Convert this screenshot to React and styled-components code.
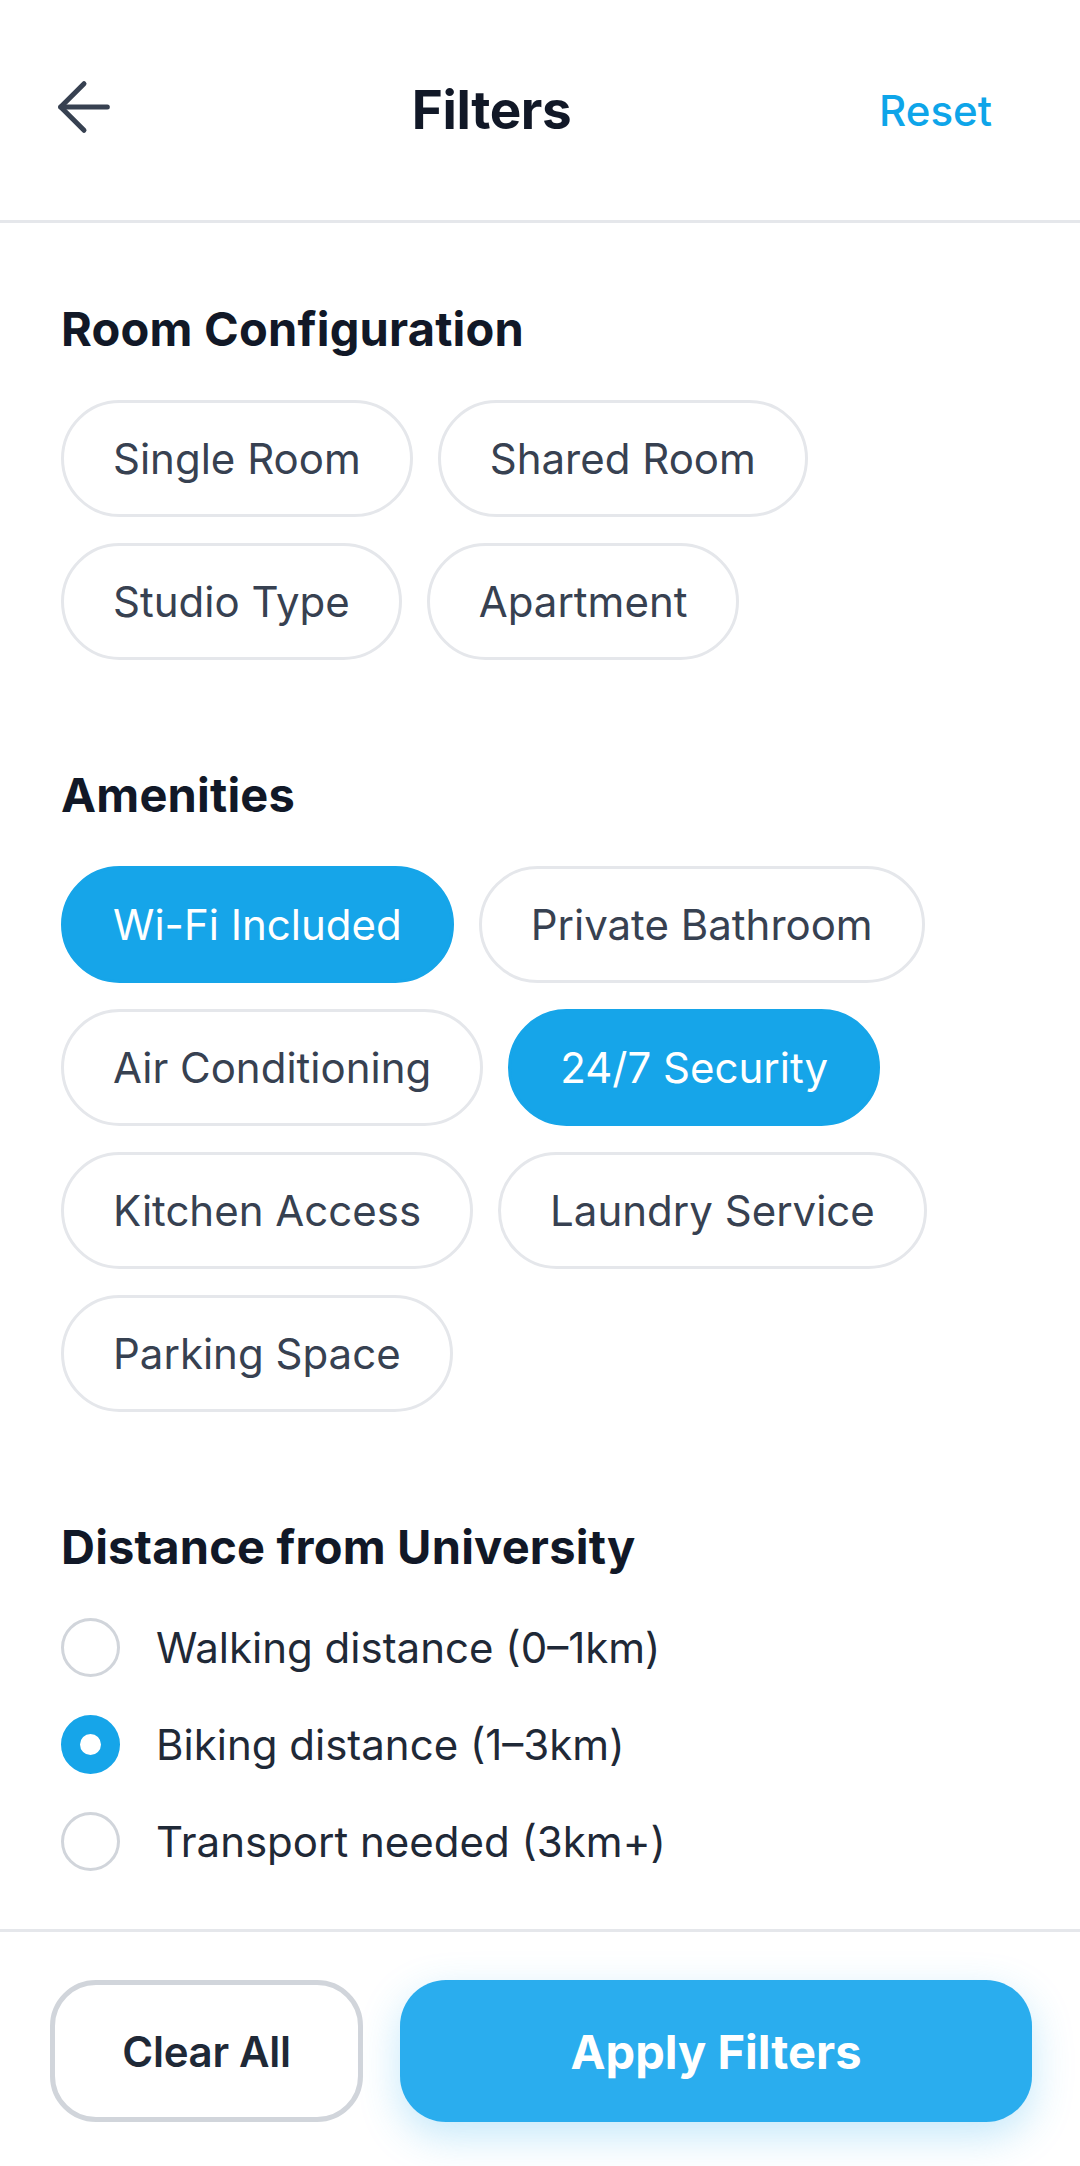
import React, { useState } from 'react';
import styled, { createGlobalStyle } from 'styled-components';
import { ArrowLeft } from 'lucide-react';

const GlobalStyle = createGlobalStyle`
  html, body {
    margin: 0;
    padding: 0;
    background: #ffffff;
  }
  body {
    font-family: "Inter", "Noto Sans", sans-serif;
    -webkit-font-smoothing: antialiased;
  }
  * {
    box-sizing: border-box;
  }
`;

const Page = styled.div`
  min-height: 100vh;
  display: flex;
  flex-direction: column;
  background: #ffffff;
`;

const Header = styled.header`
  height: 223px;
  display: flex;
  align-items: center;
  justify-content: space-between;
  padding: 0 68px 0 44px;
  border-bottom: 3px solid #e5e7eb;
`;

const IconButton = styled.button`
  width: 80px;
  height: 80px;
  padding: 0;
  border: none;
  background: none;
  color: #374151;
  display: flex;
  align-items: center;
  justify-content: center;
  margin-top: -6px;
`;

const Title = styled.h1`
  margin: 0;
  font-size: 53px;
  font-weight: 700;
  color: #111827;
  letter-spacing: -0.4px;
`;

const TextButton = styled.button`
  border: none;
  background: none;
  padding: 0 20px;
  font-family: inherit;
  font-size: 42px;
  font-weight: 500;
  color: #0ea5e9;
`;

const Main = styled.main`
  flex: 1;
  padding: 77px 61px 0;
`;

const Section = styled.section`
  margin-bottom: 106px;

  &:last-child {
    margin-bottom: 0;
  }
`;

const SectionTitle = styled.h2`
  margin: 0 0 42px;
  font-size: 47px;
  line-height: 58px;
  font-weight: 700;
  color: #111827;
  letter-spacing: 0.2px;
`;

const ChipGrid = styled.div`
  display: flex;
  flex-wrap: wrap;
  gap: 26px 25px;
`;

const Chip = styled.button`
  height: 117px;
  padding: 0 49px;
  border-radius: 999px;
  border: 3px solid ${p => (p.$active ? '#16a5e9' : '#e5e7eb')};
  background: ${p => (p.$active ? '#16a5e9' : '#ffffff')};
  color: ${p => (p.$active ? '#ffffff' : '#374151')};
  font-family: inherit;
  font-size: 42px;
  font-weight: 400;
  letter-spacing: 0;
  cursor: pointer;
`;

const RadioList = styled.div`
  display: flex;
  flex-direction: column;
  gap: 38px;
`;

const RadioRow = styled.label`
  display: flex;
  align-items: center;
  gap: 36px;
  cursor: pointer;
`;

const RadioDot = styled.span`
  width: 59px;
  height: 59px;
  flex-shrink: 0;
  border-radius: 50%;
  border: ${p => (p.$checked ? '19px solid #16a5e9' : '3px solid #d1d5db')};
  background: #ffffff;
`;

const RadioLabel = styled.span`
  font-size: 42px;
  font-weight: 400;
  color: #1f2937;
  letter-spacing: 0;
`;

const Footer = styled.footer`
  border-top: 3px solid #e5e7eb;
  padding: 48px 48px 44px 50px;
  display: flex;
  gap: 37px;
`;

const SecondaryButton = styled.button`
  width: 313px;
  height: 142px;
  border: 5px solid #d1d5db;
  border-radius: 46px;
  background: #ffffff;
  font-family: inherit;
  font-size: 42px;
  font-weight: 600;
  color: #1f2937;
  letter-spacing: -0.3px;
`;

const PrimaryButton = styled.button`
  flex: 1;
  height: 142px;
  border: none;
  border-radius: 46px;
  background: #2aadee;
  font-family: inherit;
  font-size: 47px;
  font-weight: 700;
  color: #ffffff;
  letter-spacing: 0;
  box-shadow: 0 14px 40px rgba(42, 173, 238, 0.28);
`;

const roomTypes = ['Single Room', 'Shared Room', 'Studio Type', 'Apartment'];
const amenities = [
  'Wi-Fi Included',
  'Private Bathroom',
  'Air Conditioning',
  '24/7 Security',
  'Kitchen Access',
  'Laundry Service',
  'Parking Space',
];
const distances = [
  'Walking distance (0–1km)',
  'Biking distance (1–3km)',
  'Transport needed (3km+)',
];

export default function App() {
  const [rooms, setRooms] = useState([]);
  const [picked, setPicked] = useState(['Wi-Fi Included', '24/7 Security']);
  const [distance, setDistance] = useState(1);

  const toggle = (list, setList, value) =>
    setList(list.includes(value) ? list.filter(v => v !== value) : [...list, value]);

  return (
    <Page>
      <GlobalStyle />
      <Header>
        <IconButton aria-label="Back">
          <ArrowLeft size={80} strokeWidth={1.5} />
        </IconButton>
        <Title>Filters</Title>
        <TextButton>Reset</TextButton>
      </Header>

      <Main>
        <Section>
          <SectionTitle>Room Configuration</SectionTitle>
          <ChipGrid>
            {roomTypes.map(r => (
              <Chip key={r} $active={rooms.includes(r)} onClick={() => toggle(rooms, setRooms, r)}>
                {r}
              </Chip>
            ))}
          </ChipGrid>
        </Section>

        <Section>
          <SectionTitle>Amenities</SectionTitle>
          <ChipGrid>
            {amenities.map(a => (
              <Chip key={a} $active={picked.includes(a)} onClick={() => toggle(picked, setPicked, a)}>
                {a}
              </Chip>
            ))}
          </ChipGrid>
        </Section>

        <Section>
          <SectionTitle>Distance from University</SectionTitle>
          <RadioList>
            {distances.map((d, i) => (
              <RadioRow key={d} onClick={() => setDistance(i)}>
                <RadioDot $checked={distance === i} />
                <RadioLabel>{d}</RadioLabel>
              </RadioRow>
            ))}
          </RadioList>
        </Section>
      </Main>

      <Footer>
        <SecondaryButton>Clear All</SecondaryButton>
        <PrimaryButton>Apply Filters</PrimaryButton>
      </Footer>
    </Page>
  );
}
